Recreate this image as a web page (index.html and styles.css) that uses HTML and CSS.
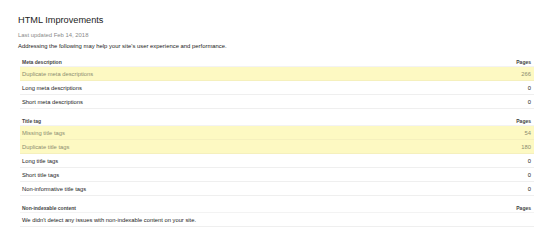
FILE: index.html
```html
<!DOCTYPE html>
<html>
<head>
<meta charset="utf-8">
<link rel="stylesheet" href="styles.css">
</head>
<body>
<div class="page">
  <h1 class="title">HTML Improvements</h1>
  <div class="updated">Last updated Feb 14, 2018</div>
  <div class="intro">Addressing the following may help your site's user experience and performance.</div>

  <div class="section">
    <div class="row head"><span>Meta description</span><span>Pages</span></div>
    <div class="row hl"><span>Duplicate meta descriptions</span><span>266</span></div>
    <div class="row"><span>Long meta descriptions</span><span>0</span></div>
    <div class="row"><span>Short meta descriptions</span><span>0</span></div>
  </div>

  <div class="section">
    <div class="row head"><span>Title tag</span><span>Pages</span></div>
    <div class="row hl"><span>Missing title tags</span><span>54</span></div>
    <div class="row hl"><span>Duplicate title tags</span><span>180</span></div>
    <div class="row"><span>Long title tags</span><span>0</span></div>
    <div class="row"><span>Short title tags</span><span>0</span></div>
    <div class="row"><span>Non-informative title tags</span><span>0</span></div>
  </div>

  <div class="section">
    <div class="row head"><span>Non-indexable content</span><span>Pages</span></div>
    <div class="row"><span>We didn't detect any issues with non-indexable content on your site.</span><span></span></div>
  </div>
</div>
</body>
</html>
```
FILE: styles.css
```css
html, body {
  margin: 0;
  padding: 0;
  background: #ffffff;
}
body {
  font-family: "Liberation Sans", Arial, sans-serif;
  color: #222;
}
.page {
  padding: 14px 25px 0 18px;
}
.title {
  margin: 0;
  font-size: 9.2px;
  line-height: 12px;
  font-weight: normal;
  color: #222;
}
.updated {
  margin-top: 5px;
  font-size: 5.9px;
  line-height: 8px;
  color: #8a8a8a;
}
.intro {
  margin-top: 3px;
  font-size: 5.9px;
  line-height: 8px;
  color: #222;
}
.section {
  margin-left: 2px;
  width: 514px;
  margin-top: 6px;
}
.section:first-of-type {
  margin-top: 4px;
}
.row {
  display: flex;
  justify-content: space-between;
  align-items: center;
  height: 13px;
  padding: 0 3px 0 2px;
  border-bottom: 1px solid #efefef;
  font-size: 5.8px;
  color: #222;
}
.row.head {
  align-items: flex-end;
  padding-bottom: 1px;
  height: 9px;
  font-size: 5px;
  font-weight: bold;
  color: #444;
  border-bottom: 1px solid #f3f3f3;
}
.row.hl {
  background: #fdf9c2;
  color: #8c8c70;
  border-bottom-color: #f5f0bd;
}
```
